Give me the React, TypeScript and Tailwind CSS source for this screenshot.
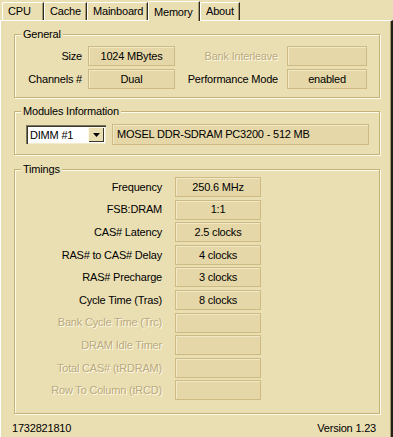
import React from 'react';

const font = { fontFamily: '"Liberation Sans", Arial, sans-serif' };

type Tab = { label: string; w: string; active?: boolean };

const tabs: Tab[] = [
  { label: 'CPU', w: 'w-[42px]' },
  { label: 'Cache', w: 'w-[43px]' },
  { label: 'Mainboard', w: 'w-[61px]' },
  { label: 'Memory', w: 'w-[52px]', active: true },
  { label: 'About', w: 'w-[40px]' },
];

const timings: { label: string; value: string; disabled?: boolean }[] = [
  { label: 'Frequency', value: '250.6 MHz' },
  { label: 'FSB:DRAM', value: '1:1' },
  { label: 'CAS# Latency', value: '2.5 clocks' },
  { label: 'RAS# to CAS# Delay', value: '4 clocks' },
  { label: 'RAS# Precharge', value: '3 clocks' },
  { label: 'Cycle Time (Tras)', value: '8 clocks' },
  { label: 'Bank Cycle Time (Trc)', value: '', disabled: true },
  { label: 'DRAM Idle Timer', value: '', disabled: true },
  { label: 'Total CAS# (tRDRAM)', value: '', disabled: true },
  { label: 'Row To Column (tRCD)', value: '', disabled: true },
];

// read-only value field
function Field({ value, className }: { value?: string; className: string }) {
  return (
    <div
      className={`h-[20px] flex items-center justify-center border border-[#cdbb83] bg-[#e5d7a7] shadow-[inset_1px_1px_0_#f1e8c8] text-black ${className}`}
    >
      {value}
    </div>
  );
}

function Label({ text, disabled, className }: { text: string; disabled?: boolean; className: string }) {
  return (
    <div
      className={`text-right whitespace-nowrap ${className} ${
        disabled ? 'text-[#b9aa7d] [text-shadow:1px_1px_0_#fffbe9]' : 'text-black'
      }`}
    >
      {text}
    </div>
  );
}

// etched group box with its title over the top line
function Group({ title, className, children }: { title: string; className: string; children: React.ReactNode }) {
  return (
    <div
      className={`relative w-[366px] border border-[#c4b279] shadow-[inset_1px_1px_0_#fffbe9,1px_1px_0_#fffbe9] ${className}`}
    >
      <span className="absolute left-[6px] -top-[8px] px-[2px] bg-[#eadeb3] leading-[14px] text-black">{title}</span>
      {children}
    </div>
  );
}

export default function App() {
  return (
    <div
      className="w-[393px] h-[437px] bg-[#eadeb3] text-[11px] tracking-[-0.2px] overflow-hidden flex flex-col"
      style={font}
    >
      {/* tab strip */}
      <div className="h-[20px] flex items-end pl-[2px] relative z-10">
        {tabs.map((t) =>
          t.active ? (
            <div
              key={t.label}
              className={`${t.w} h-[20px] -mb-[1px] flex items-start pl-[5px] pt-[2px] bg-[#eadeb3] border-l border-t border-white rounded-tl-[2px] border-r border-r-[#2e2b22] shadow-[inset_-1px_0_0_#a8986a] text-black`}
            >
              {t.label}
            </div>
          ) : (
            <div
              key={t.label}
              className={`${t.w} h-[18px] flex items-center pl-[5px] border-l border-t border-white rounded-tl-[2px] border-r border-r-[#2e2b22] shadow-[inset_-1px_0_0_#a8986a] text-black`}
            >
              {t.label}
            </div>
          )
        )}
      </div>

      {/* page */}
      <div className="flex-1 border-t border-l border-white border-r-2 border-r-[#22201a] shadow-[inset_-1px_0_0_#a8986a] pl-[13px] pt-[13px] flex flex-col">
        <Group title="General" className="h-[64px] pt-[11px]">
          <div className="flex flex-col gap-[3px]">
            <div className="flex items-center">
              <Label text="Size" className="w-[67px]" />
              <Field value="1024 MBytes" className="ml-[6px] w-[87px]" />
              <Label text="Bank Interleave" disabled className="w-[103px]" />
              <Field className="ml-[9px] w-[80px]" />
            </div>
            <div className="flex items-center">
              <Label text="Channels #" className="w-[67px]" />
              <Field value="Dual" className="ml-[6px] w-[87px]" />
              <Label text="Performance Mode" className="w-[103px]" />
              <Field value="enabled" className="ml-[9px] w-[80px]" />
            </div>
          </div>
        </Group>

        <Group title="Modules Information" className="h-[44px] mt-[13px] flex items-center pl-[11px]">
          <div className="mt-[3px] flex items-center">
            <div className="w-[80px] h-[19px] flex bg-white border-t border-l border-[#7d7559] shadow-[inset_1px_1px_0_#3a372c,inset_-1px_-1px_0_#f3ebcc]">
              <span className="flex-1 pl-[3px] leading-[18px] text-black">DIMM #1</span>
              <div className="w-[16px] m-[1px] mr-[2px] mb-[2px] bg-[#eadeb3] flex items-center justify-center shadow-[inset_1px_1px_0_#fffbe9,inset_-1px_-1px_0_#3a372c]">
                <svg width="7" height="4" viewBox="0 0 7 4">
                  <path d="M0 0h7L3.5 4z" fill="#000" />
                </svg>
              </div>
            </div>
            <Field value="MOSEL DDR-SDRAM PC3200 - 512 MB" className="ml-[6px] w-[257px] h-[21px] !justify-start pl-[4px]" />
          </div>
        </Group>

        <Group title="Timings" className="h-[245px] mt-[14px] pt-[7px]">
          <div className="flex flex-col gap-[2.6px]">
            {timings.map((r) => (
              <div key={r.label} className="flex items-center">
                <Label text={r.label} disabled={r.disabled} className="w-[147px]" />
                <Field value={r.value} className="ml-[13px] w-[86px]" />
              </div>
            ))}
          </div>
        </Group>

        <div className="flex justify-between items-center w-[364px] -ml-[2px] mt-[6px] text-black">
          <span>1732821810</span>
          <span>Version 1.23</span>
        </div>
      </div>
    </div>
  );
}
